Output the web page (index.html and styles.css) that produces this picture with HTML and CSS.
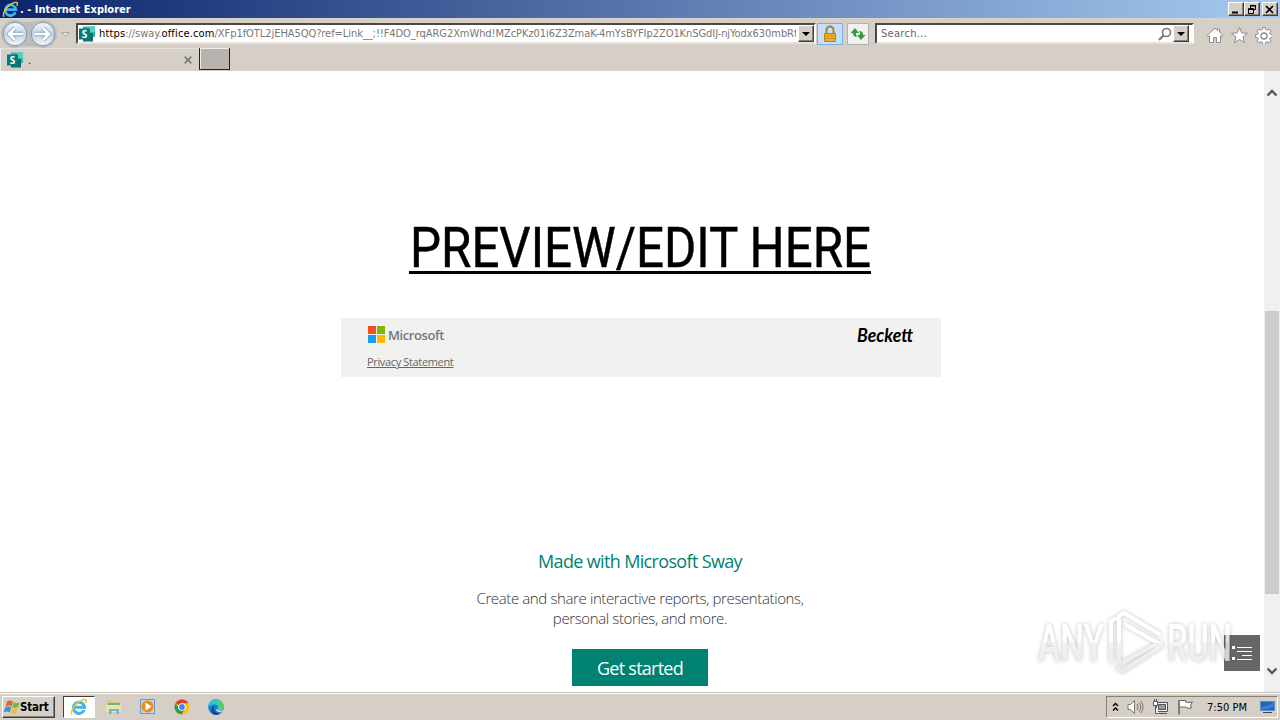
FILE: index.html
```html
<!DOCTYPE html>
<html lang="en">
<head>
    <meta charset="UTF-8">
    <meta name="viewport" content="width=device-width, initial-scale=1.0">
    <title>. - Internet Explorer</title>
    <link rel="stylesheet" href="styles.css">
</head>
<body>

    <!-- shared icons -->
    <svg width="0" height="0" class="defs">
        <defs>
            <linearGradient id="ball" x1="0" y1="0" x2="0" y2="1">
                <stop offset="0" stop-color="#f4f8fc"/>
                <stop offset=".5" stop-color="#c3d2e4"/>
                <stop offset="1" stop-color="#f5f9fc"/>
            </linearGradient>
            <symbol id="ie" viewBox="0 0 18 18">
                <path d="M14.200 12A5.600 5.600 0 1 1 14.600 9.200H5" fill="none" stroke="#3fb4ea" stroke-width="2.900"/>
                <path d="M2.300 16.500C-.5 15 4 7 9 3.700c3.700-2.500 7-3.200 7.300-1.300.1.800-.2 1.600-.7 2.600" fill="none" stroke="#f3c52d" stroke-width="1.500"/>
            </symbol>
            <symbol id="sway" viewBox="0 0 16 16">
                <path d="M4 .5h12V11H4z" fill="#2bb5a4"/>
                <path d="M10 .5h6V6h-6z" fill="#57d0bd"/>
                <path d="M4 7h10v8.500H4z" fill="#0b6f6b"/>
                <path d="M0 2.500h11v11H0z" fill="#067a78"/>
                <text x="2.700" y="11.500" class="sway-letter">S</text>
            </symbol>
        </defs>
    </svg>

    <header class="titlebar">
        <svg class="title-icon"><use href="#ie"/></svg>
        <span class="title">. - Internet Explorer</span>
        <div class="window-buttons">
            <button><svg width="13" height="11"><path d="M3 8.500h6" stroke="#000" stroke-width="2"/></svg></button>
            <button><svg width="13" height="11" fill="none" stroke="#000"><path d="M5.500 4V1.500h5v4H9M5 2h6M3.500 4.500h5v5h-5zM3 5.500h6"/></svg></button>
            <button class="close"><svg width="13" height="11"><path d="M3 2l7 7M10 2L3 9" stroke="#000" stroke-width="1.700"/></svg></button>
        </div>
    </header>

    <div class="toolbar">
        <svg class="nav" width="72" height="30">
            <path d="M15 1q14 4 28 0a14 14 0 0 1 0 28q-14-4-28 0a14 14 0 0 1 0-28" fill="#bcbcbd"/>
            <circle cx="15" cy="15" r="11.700" fill="url(#ball)" stroke="#8298b0"/>
            <circle cx="43" cy="15" r="11.700" fill="url(#ball)" stroke="#8298b0"/>
            <path d="M23 15H10M15 9l-6 6 6 6M35 15h13M43 9l6 6-6 6" fill="none" stroke="#8da4bd" stroke-width="4.300"/>
            <path d="M23 15H10M15 9l-6 6 6 6M35 15h13M43 9l6 6-6 6" fill="none" stroke="#fff" stroke-width="2.700"/>
            <path d="M61.500 13.500h8l-4 4z" fill="#e4e2df" stroke="#aaa7a3"/>
        </svg>
        <div class="address">
            <svg class="favicon"><use href="#sway"/></svg>
            <div class="url"><b>https</b>://sway.<b>office.com</b>/XFp1fOTL2jEHA5QQ?ref=Link__;!!F4DO_rqARG2XmWhd!MZcPKz01i6Z3ZmaK-4mYsBYFIp2ZO1KnSGdIJ-njYodx630mbRt(</div>
            <button class="drop"></button>
        </div>
        <div class="lock">
            <svg width="16" height="18"><path d="M4.500 9V5a3.500 3.500 0 0 1 7 0v4" fill="none" stroke="#a58035" stroke-width="2"/><path d="M2.500 8.500h11v8h-11z" fill="#edb628" stroke="#b98213"/><path d="M3 11h10M3 13.500h10" stroke="#c98f16"/></svg>
        </div>
        <div class="refresh">
            <svg width="16" height="16" fill="#2f9d3b"><path d="M5 2L.5 7H3q0 4 4 4-1.500-1.500-1-4h3zM11 14l4.500-5H13q0-4-4-4 1.500 1.500 1 4H7z"/></svg>
        </div>
        <div class="search">
            <span>Search...</span>
            <svg width="14" height="14" fill="none" stroke="#777"><circle cx="8.500" cy="5.500" r="4" stroke-width="1.600"/><path d="M5.500 8.500l-4.500 4.500" stroke-width="2.200"/></svg>
            <button class="drop"></button>
        </div>
        <svg class="tools" width="66" height="18" fill="#fff" stroke="#8b8b8b">
            <path d="M1 9.500L9 2l2.500 2.300V3h2v3.200L17 9.500l-1 1.200-1.500-1V16.500h-4v-5h-3v5h-4V9.700L2 10.700z"/>
            <path d="M33.500 1.500l2.200 5.400 5.800.4-4.500 3.700 1.500 5.700-5-3.200-5 3.200 1.500-5.700-4.500-3.700 5.800-.4z"/>
            <path d="M56.600 1.500h2.800l.4 2.200 1.300.6 1.900-1.300 2 2-1.300 1.900.5 1.200 2.200.5v2.800l-2.200.4-.5 1.300 1.300 1.900-2 2-1.900-1.300-1.300.5-.4 2.200h-2.800l-.4-2.200-1.300-.5-1.900 1.300-2-2 1.300-1.900-.5-1.300-2.200-.4V8.600l2.200-.5.500-1.200L51 5l2-2 1.900 1.300 1.300-.6z"/>
            <circle cx="58" cy="10" r="3" stroke-width="1.300"/>
        </svg>
    </div>

    <div class="tabs">
        <div class="tab">
            <svg class="favicon"><use href="#sway"/></svg>
            <span>.</span>
            <svg width="8" height="8"><path d="M.7.7l6.600 6.600M7.300.7L.7 7.300" stroke="#807d79" stroke-width="1.800"/></svg>
        </div>
        <div class="new-tab"></div>
    </div>

    <div class="viewport">
        <main class="page">
            <a class="preview">
                <svg width="462" height="54"><text x="1" y="50" textLength="461" lengthAdjust="spacingAndGlyphs">PREVIEW/EDIT HERE</text></svg>
            </a>

            <div class="brand">
                <div class="brand-left">
                    <div class="microsoft">
                        <svg width="17" height="17"><path d="M0 0h8v8H0z" fill="#f25022"/><path d="M9 0h8v8H9z" fill="#7fba00"/><path d="M0 9h8v8H0z" fill="#1b9df0"/><path d="M9 9h8v8H9z" fill="#ffb900"/></svg>
                        <span>Microsoft</span>
                    </div>
                    <a class="privacy">Privacy Statement</a>
                </div>
                <svg class="beckett" width="60" height="24"><text x="2" y="18" textLength="56" lengthAdjust="spacingAndGlyphs">Beckett</text></svg>
            </div>

            <section class="sway">
                <h2>Made with Microsoft Sway</h2>
                <p>Create and share interactive reports, presentations,<br>personal stories, and more.</p>
                <button class="start-btn">Get started</button>
            </section>
        </main>

        <div class="scrollbar">
            <svg width="12" height="8"><path d="M1.500 6.500L6 2l4.500 4.500" fill="none" stroke="#555" stroke-width="2.300"/></svg>
            <div class="thumb"></div>
            <svg width="12" height="8"><path d="M1.500 1.500L6 6l4.500-4.500" fill="none" stroke="#555" stroke-width="2.300"/></svg>
        </div>

        <div class="outline-btn">
            <svg width="20" height="16"><path d="M0 1h3v3H0zM0 12h3v3H0z" fill="#fff"/><path d="M5 2.500h15M5 6.500h15M10 10.500h10M5 14.500h15" stroke="#fff"/></svg>
        </div>

        <svg class="watermark" width="204" height="70">
            <defs>
                <linearGradient id="fade" x1="0" y1="0" x2="0" y2="70" gradientUnits="userSpaceOnUse">
                    <stop offset=".49" stop-color="#fff"/>
                    <stop offset=".52" stop-color="#efefef"/>
                    <stop offset="1" stop-color="#e6e6e6"/>
                </linearGradient>
            </defs>
            <text x="4" y="54" textLength="66" lengthAdjust="spacingAndGlyphs">ANY</text>
            <text x="133" y="54" textLength="65" lengthAdjust="spacingAndGlyphs">RUN</text>
            <g fill="none" stroke="url(#fade)" stroke-width="4" stroke-linejoin="round">
                <path d="M77 56V14l6-3M85 56V9l5-3 37 22"/>
                <path d="M90 17l34 19-36 20M82 60l7 4 38-25v-5"/>
            </g>
        </svg>
    </div>

    <footer class="taskbar">
        <button class="start">
            <svg width="17" height="16"><path d="M4 2.500q3-2 6 0L8.500 7.500q-3-2-6 0z" fill="#e8602c"/><path d="M10.700 3q3 2 6 0L15.200 8q-3 2-6 0z" fill="#79b943"/><path d="M2.200 8.500q3-2 6 0L6.700 13.500q-3-2-6 0z" fill="#3c91d5"/><path d="M9 9q3 2 6 0l-1.500 5q-3 2-6 0z" fill="#f5bd30"/></svg>
            Start
        </button>
        <div class="task active"><svg width="18" height="18"><use href="#ie"/></svg></div>
        <div class="task">
            <svg width="18" height="18"><path d="M2 3h5l1 1.500h7V14H2z" fill="#e7c65f"/><path d="M3 5h12v3H3z" fill="#69b783"/><path d="M1 7h15v7H1z" fill="#f6e19a"/><path d="M4 16v-5h10v5h-2.500v-3h-5v3z" fill="#69b6df"/></svg>
        </div>
        <div class="task">
            <svg width="18" height="18"><path d="M1.500 1.500h14v14h-14z" fill="#b6d8ef" stroke="#609bca"/><circle cx="8.500" cy="8.500" r="6" fill="#f28a18"/><path d="M6.500 4.500l6 4-6 4z" fill="#fff"/></svg>
        </div>
        <div class="task">
            <svg width="18" height="18"><circle cx="9" cy="9" r="7.500" fill="#fbc116"/><path d="M9 9L2.500 5.250A7.500 7.500 0 0 1 15.500 5.250H9z" fill="#e33b2e"/><path d="M2.500 5.250A7.500 7.500 0 0 0 8.500 16.500L12 11 6 10.500z" fill="#24a148"/><circle cx="9" cy="9" r="3.800" fill="#fff"/><circle cx="9" cy="9" r="2.900" fill="#4285f4"/></svg>
        </div>
        <div class="task">
            <svg width="18" height="18"><circle cx="9" cy="9" r="7.800" fill="#1580d0"/><path d="M1.200 9a7.800 7.800 0 0 1 15.600 0c0 3-4 4-6.300 2.500 1.500-2 .5-5-3-5C4 6.500 2 8 1.200 9z" fill="#38bfd5"/><path d="M9 1.200A7.800 7.800 0 0 1 16.800 9c0 3-4 4-6.300 2.500C12 9 12 4 9 1.200" fill="#51cf75"/><path d="M7.500 8c-2 4 1.500 8 6.500 7a7.800 7.800 0 0 1-8.500.9C3 13 4.500 9 7.500 8" fill="#124b91"/><path d="M10.500 11.500c2 1.400 4.300 1 5.700.3L14.800 14c-3 1-5.800-.5-6-3z" fill="#d6cfc8"/></svg>
        </div>

        <div class="tray">
            <svg width="7" height="10" fill="none" stroke="#000" stroke-width="1.400"><path d="M1 4l2.500-2.500L6 4M1 8.500L3.500 6 6 8.500"/></svg>
            <svg width="17" height="16" fill="none" stroke="#777"><path d="M1 5.500h2.500l4-4v13l-4-4H1z" fill="#fff"/><path d="M10 5q2 3 0 6M12 3.500q3.500 4.500 0 9M14 2q4 6 0 12"/></svg>
            <svg width="17" height="16" stroke="#555"><path d="M4.500 3.500h11v9h-11z" fill="#eee"/><path d="M6.500 5.500h7v5h-7z" fill="#999"/><path d="M7 14.500h8" fill="none"/><path d="M1.500 2.500h4v4h-4zM3.500 6.500v8h3M2.500 0v2M4.500 0v2" fill="#fff"/></svg>
            <svg width="17" height="16" stroke="#666"><path d="M2.500 1.500h6v1.500q3 1 7 0l-2 3 1 3q-4 1-6-1h-6" fill="#fff"/><path d="M2 1v14.500" stroke-width="1.600"/></svg>
            <span class="clock">7:50 PM</span>
            <svg width="15" height="14"><path d="M.5 1.500h14v9H.5z" fill="#1d64bd" stroke="#5d8cc5"/><path d="M1 7q7-1 13-5v4q-6 4-13 4z" fill="#347fd2"/><path d="M3 12.500h9" stroke="#444"/></svg>
        </div>
    </footer>

</body>
</html>
```
FILE: styles.css
```css
* {
    box-sizing: border-box;
}

body {
    margin: 0;
    width: 1280px;
    height: 720px;
    overflow: hidden;
    display: flex;
    flex-direction: column;
    background: #d6cfc8;
    font-family: "DejaVu Sans Condensed", "DejaVu Sans", sans-serif;
    font-size: 11px;
    color: #000;
}

svg {
    display: block;
    flex-shrink: 0;
}

button {
    font-family: inherit;
    padding: 0;
}

.defs {
    position: absolute;
}

.sway-letter {
    font: bold 10px "Open Sans", sans-serif;
    letter-spacing: 0;
    fill: #fff;
}

/* title bar */
.titlebar {
    height: 18px;
    flex-shrink: 0;
    display: flex;
    align-items: center;
    padding: 0 2px;
    background: linear-gradient(90deg, #0b246b, #a6caf0);
}

.title-icon {
    width: 17px;
    height: 17px;
}

.title {
    margin-left: 1px;
    color: #fff;
    font-weight: bold;
    font-size: 11px;
}

.window-buttons {
    display: flex;
    margin-left: auto;
}

.window-buttons button {
    width: 16px;
    height: 14px;
    background: #d6cfc8;
    border: 1px solid;
    border-color: #fff #404040 #404040 #fff;
    box-shadow: inset -1px -1px #858078;
}

.window-buttons .close {
    margin-left: 2px;
}

/* address row */
.toolbar {
    height: 30px;
    flex-shrink: 0;
    display: flex;
    align-items: center;
    border-top: 1px solid #d8d4c8;
}

.nav {
    margin-right: 4px;
}

.address, .search {
    height: 21px;
    display: flex;
    align-items: center;
    background: #fff;
    border: 2px solid;
    border-color: #4e4842 #fff #e6e1dc #4e4842;
}

.address {
    width: 740px;
    padding-left: 1px;
}

.favicon {
    width: 16px;
    height: 16px;
}

.url {
    width: 697px;
    margin-left: 4px;
    overflow: hidden;
    white-space: nowrap;
    letter-spacing: -0.06px;
    color: #777;
}

.url b {
    font-weight: normal;
    letter-spacing: 0.15px;
    color: #000;
}

.drop {
    width: 16px;
    height: 17px;
    margin-left: auto;
    display: flex;
    align-items: center;
    justify-content: center;
    background: #d6cfc8;
    border: 1px solid;
    border-color: #fff #404040 #404040 #fff;
    box-shadow: inset -1px -1px #858078;
}

.drop::before {
    content: "";
    border: 4px solid transparent;
    border-top-color: #000;
    border-bottom: 0;
}

.lock, .refresh {
    height: 22px;
    display: flex;
    align-items: center;
    justify-content: center;
}

.lock {
    width: 26px;
    margin-left: 1px;
    background: #c5dffa;
    border: 1px solid #79aee3;
}

.refresh {
    width: 22px;
    margin-left: 4px;
    background: #f1f1ef;
    border: 1px solid #b4b1ad;
}

.search {
    width: 319px;
    margin-left: 6px;
    padding: 0 3px 0 4px;
    letter-spacing: 0.3px;
    color: #666;
}

.search svg {
    margin-left: auto;
}

.search .drop {
    margin-left: 1px;
}

.tools {
    margin-left: 12px;
    margin-top: 3px;
}

/* tabs */
.tabs {
    height: 23px;
    flex-shrink: 0;
    display: flex;
}

.tab {
    width: 199px;
    display: flex;
    align-items: center;
    padding: 0 7px 0 6px;
    border-top: 1px solid #e5e1dc;
    border-left: 1px solid #eee;
}

.tab span {
    margin-left: 5px;
}

.tab > svg:last-child {
    margin-left: auto;
}

.new-tab {
    width: 31px;
    height: 22px;
    background: #bab2ad;
    border: 1px solid #222;
    box-shadow: inset 1px 1px #eee;
    border-top: none;
}

/* page */
.viewport {
    position: relative;
    height: 621px;
    flex-shrink: 0;
    display: flex;
    background: #fff;
}

.page {
    width: 1264px;
    padding-left: 16px;
    display: flex;
    flex-direction: column;
    align-items: center;
}

.preview {
    margin-top: 146px;
    border-bottom: 3px solid #000;
}

.preview svg, .beckett, .watermark {
    overflow: visible;
}

.preview text {
    font-family: Roboto, sans-serif;
    font-size: 56px;
    stroke: #000;
    stroke-width: 0.5px;
}

.brand {
    width: 600px;
    height: 59px;
    margin: 44px 0 0 2px;
    padding: 8px 26px 0;
    display: flex;
    justify-content: space-between;
    background: #f1f1f1;
    font-family: "Open Sans", sans-serif;
}

.microsoft {
    display: flex;
    align-items: center;
    height: 17px;
    padding-left: 1px;
    gap: 3px;
    font-size: 13px;
    font-weight: 600;
    letter-spacing: -0.4px;
    color: #777;
}

.privacy {
    display: block;
    margin-top: 11px;
    line-height: 16px;
    font-size: 11px;
    letter-spacing: -0.35px;
    text-decoration: underline;
    color: #666;
}

.beckett {
    margin-top: -2px;
}

.beckett text {
    font: italic bold 19px Lato, sans-serif;
}

.sway {
    margin-top: 171px;
    font-family: "Open Sans", sans-serif;
    text-align: center;
}

.sway h2 {
    margin: 0;
    font-size: 18px;
    font-weight: normal;
    line-height: 26px;
    letter-spacing: -0.65px;
    color: #008272;
}

.sway p {
    margin: 14px 0 0;
    font-size: 15px;
    font-weight: 300;
    line-height: 20px;
    letter-spacing: -0.38px;
    color: #333;
}

.start-btn {
    width: 136px;
    height: 37px;
    margin-top: 21px;
    border: none;
    background: #008272;
    color: #fff;
    font-size: 18px;
    letter-spacing: -0.75px;
}

.scrollbar {
    width: 16px;
    display: flex;
    flex-direction: column;
    align-items: center;
    padding: 18px 0 17px;
    background: #f0f0f0;
}

.thumb {
    width: 14px;
    height: 283px;
    margin: 214px 0 auto;
    background: #cdcdcd;
}

.outline-btn {
    position: absolute;
    right: 20px;
    bottom: 21px;
    width: 36px;
    height: 36px;
    display: flex;
    align-items: center;
    justify-content: center;
    background: #666;
}

.watermark {
    position: absolute;
    left: 1034px;
    top: 536px;
    filter: drop-shadow(0 0 2px rgba(0, 0, 0, 0.3));
    opacity: 0.8;
}

.watermark text {
    font-family: Roboto, sans-serif;
    font-size: 52px;
    font-weight: 500;
    fill: url(#fade);
}

/* taskbar */
.taskbar {
    height: 28px;
    flex-shrink: 0;
    display: flex;
    align-items: center;
    padding: 1px 2px 0;
    border-top: 1px solid #c4c0b4;
    box-shadow: inset 0 1px #fff;
}

.start {
    width: 53px;
    height: 22px;
    display: flex;
    align-items: center;
    background: #d6cfc8;
    border: 1px solid;
    border-color: #fff #404040 #404040 #fff;
    box-shadow: inset -1px -1px #858078;
    font-size: 11.5px;
    font-weight: bold;
    letter-spacing: -0.2px;
}

.task {
    width: 30px;
    height: 22px;
    margin-right: 4px;
    display: flex;
    align-items: center;
    justify-content: center;
}

.active {
    margin-left: 8px;
    width: 32px;
    background: #fff;
    border: 1px solid;
    border-color: #404040 #fff #fff #404040;
}

.tray {
    width: 172px;
    height: 22px;
    margin-left: auto;
    display: flex;
    align-items: center;
    padding: 0 2px 0 5px;
    border: 1px solid;
    border-color: #858078 #fff #fff #858078;
}

.tray svg + svg {
    margin-left: 8px;
}

.clock {
    margin: 0 auto;
}
```
